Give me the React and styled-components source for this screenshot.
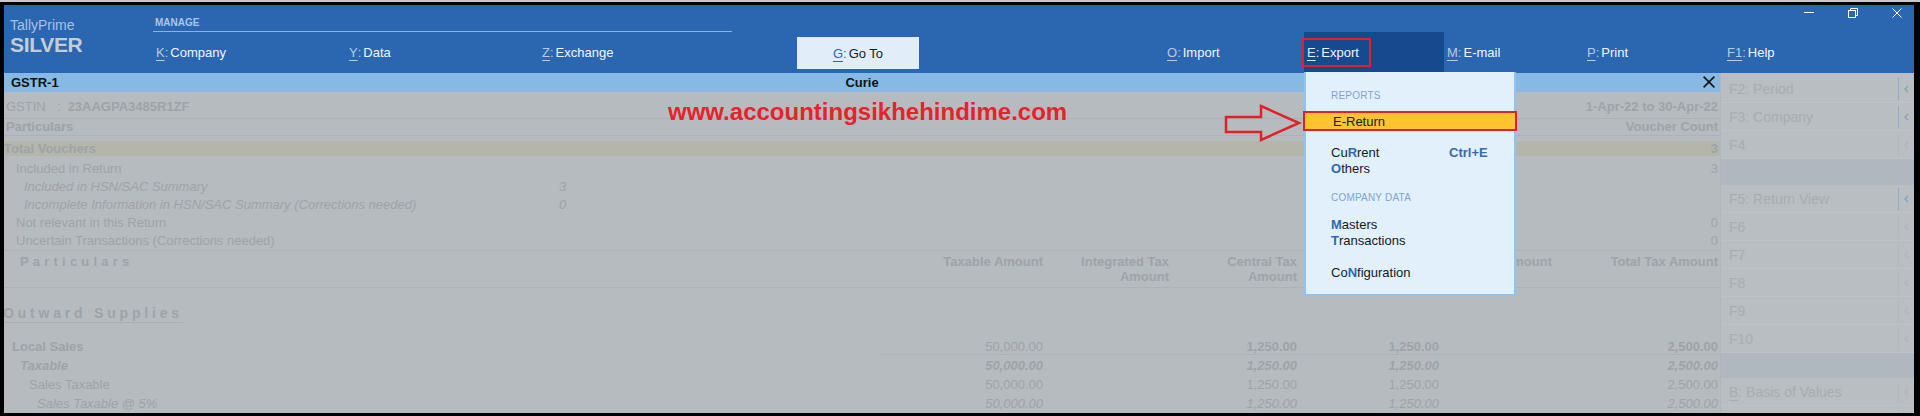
import React from "react";
import styled, { createGlobalStyle } from "styled-components";

const GlobalStyle = createGlobalStyle`
  html, body {
    margin: 0;
    padding: 0;
    background: #000;
  }
  body {
    font-family: "Liberation Sans", Arial, sans-serif;
    font-size: 13px;
  }
  * {
    box-sizing: border-box;
  }
`;

// ---------- frame ----------
const Screen = styled.div`
  width: 1920px;
  height: 416px;
  border-top: 2px solid #c9c9c9;
  background: #000;
`;

const Frame = styled.div`
  position: relative;
  height: 414px;
  border-style: solid;
  border-color: #000;
  border-width: 3px 6px 3px 4px;
  display: flex;
  flex-direction: column;
  overflow: hidden;
`;

// ---------- top bar ----------
const Header = styled.div`
  height: 68px;
  flex-shrink: 0;
  display: flex;
  background: #2b66b0;
`;

const Brand = styled.div`
  width: 149px;
  padding: 12px 0 0 6px;
`;

const BrandName = styled.div`
  font-size: 14px;
  line-height: 16px;
  color: #a8c2e3;
`;

const Edition = styled.div`
  font-size: 21px;
  line-height: 24px;
  font-weight: bold;
  color: #c6ccd5;
  letter-spacing: -0.3px;
`;

const Nav = styled.div`
  flex: 1;
  display: flex;
  flex-direction: column;
`;

const NavTop = styled.div`
  height: 27px;
  display: flex;
`;

const ManageGroup = styled.div`
  width: 579px;
  border-bottom: 1px solid #8db2df;
  padding: 12px 0 0 2px;
  font-size: 10px;
  line-height: 12px;
  font-weight: bold;
  color: #a9c6ea;
`;

const WindowControls = styled.div`
  margin-left: auto;
  display: flex;
  align-items: flex-start;
  gap: 34px;
  padding: 3px 12px 0 0;
`;

const NavItems = styled.div`
  height: 41px;
  display: flex;
`;

const NavItem = styled.div`
  width: ${(p) => p.$w}px;
  margin-left: ${(p) => p.$offset || 0}px;
  padding-left: 3px;
  display: flex;
  align-items: center;
  color: #f2f6fb;
  background: ${(p) => (p.$active ? "#154a8f" : "transparent")};
  white-space: nowrap;
`;

const KeyHint = styled.span`
  color: ${(p) => p.$tone || "#b4cbe8"};
  text-decoration: underline;
  text-underline-offset: 3px;
`;

const Colon = styled.span`
  color: ${(p) => p.$tone || "#b4cbe8"};
  margin-right: 2px;
`;

const GoToButton = styled.div`
  width: 122px;
  height: 32px;
  margin: 5px 0 0 65px;
  display: flex;
  align-items: center;
  justify-content: center;
  background: #e1eefa;
  color: #1a1a1a;
`;

const Annotated = styled.span`
  display: flex;
  align-items: center;
  height: 29px;
  margin-left: -5px;
  padding: 0 10px 0 3px;
  border: 2px solid #e3202a;
`;

// ---------- body ----------
const Body = styled.div`
  flex: 1;
  display: flex;
  min-height: 0;
`;

const Content = styled.div`
  width: 1716px;
  flex-shrink: 0;
  display: flex;
  flex-direction: column;
  background: #b6bbbf;
  color: #9ea3a8;
  overflow: hidden;
`;

const TitleBar = styled.div`
  height: 20px;
  display: grid;
  grid-template-columns: 1fr auto 1fr;
  align-items: center;
  background: #86bae5;
  color: #111;
  font-weight: bold;
`;

const TitleLeft = styled.span`
  padding-left: 7px;
`;

const TitleClose = styled.span`
  justify-self: end;
  padding-right: 5px;
  display: flex;
`;

const InfoRow = styled.div`
  height: 29px;
  display: flex;
  justify-content: space-between;
  align-items: flex-end;
  padding: 0 2px 3px 2px;
  line-height: 16px;
  border-bottom: 1px solid #adb2b7;
`;

const InfoLabel = styled.span`
  display: inline-block;
  width: 51px;
`;

const Strong = styled.span`
  font-weight: bold;
  margin-left: ${(p) => p.$gap || 0}px;
`;

const HeadRow = styled.div`
  height: 17px;
  display: flex;
  justify-content: space-between;
  align-items: center;
  padding: 0 2px;
  font-weight: bold;
  border-bottom: 1px solid #adb2b7;
`;

const TotalRow = styled.div`
  height: 15px;
  margin-top: 5px;
  display: flex;
  justify-content: space-between;
  align-items: center;
  padding: 0 2px 0 0;
  background: #b3b6a8;
  font-weight: bold;
`;

const DetailBlock = styled.div`
  padding-top: 4px;
  border-bottom: 1px solid #adb2b7;
`;

const DetailRow = styled.div`
  height: 18px;
  line-height: 18px;
  display: grid;
  grid-template-columns: 555px 1fr auto;
  padding-right: 2px;
  font-style: ${(p) => (p.$italic ? "italic" : "normal")};
`;

const DetailLabel = styled.span`
  padding-left: ${(p) => p.$indent}px;
  white-space: nowrap;
`;

const AMOUNT_COLUMNS = "875px 164px 126px 128px 142px 113px 166px";

const ColumnHeader = styled.div`
  height: 39px;
  display: grid;
  grid-template-columns: ${AMOUNT_COLUMNS};
  padding: 3px 2px 0 0;
  line-height: 15px;
  font-weight: bold;
  border-bottom: 1px solid #adb2b7;
`;

const SpacedTitle = styled.span`
  padding-left: ${(p) => p.$indent}px;
  letter-spacing: 4.2px;
  font-weight: bold;
`;

const HeaderCell = styled.span`
  text-align: right;
`;

const SectionWrap = styled.div`
  padding-top: 17px;
`;

const SectionTitle = styled.div`
  display: inline-block;
  width: 180px;
  margin-left: -1px;
  line-height: 17px;
  font-size: 14px;
  font-weight: bold;
  letter-spacing: 3.8px;
  white-space: nowrap;
  border-bottom: 1px solid #a9aeb3;
`;

const AmountRow = styled.div`
  height: ${(p) => p.$h}px;
  margin-top: ${(p) => p.$top || 0}px;
  display: grid;
  grid-template-columns: ${AMOUNT_COLUMNS};
  padding-right: 2px;
  align-items: stretch;
  font-style: ${(p) => (p.$italic ? "italic" : "normal")};
`;

const RowLabel = styled.span`
  display: flex;
  align-items: center;
  padding-left: ${(p) => p.$indent}px;
  font-weight: ${(p) => (p.$bold ? "bold" : "normal")};
`;

const AmountCell = styled.span`
  display: flex;
  align-items: center;
  justify-content: flex-end;
  font-weight: ${(p) => (p.$bold ? "bold" : "normal")};
  border-bottom: ${(p) => (p.$ruled ? "1px solid #adb2b7" : "none")};
`;

// ---------- side buttons ----------
const SidePanel = styled.div`
  flex: 1;
  padding-top: 2px;
  background: #b8bdc1;
  border-left: 1px solid #afb5bb;
  display: flex;
  flex-direction: column;
`;

const SideRow = styled.div`
  height: 28px;
  flex-shrink: 0;
  display: flex;
  align-items: center;
  background: #b9bec2;
  border-bottom: 1px solid #bfc3c7;
`;

const SideLabel = styled.span`
  flex: 1;
  padding-left: 8px;
  font-size: 14px;
  color: #a7adb2;
  white-space: nowrap;
`;

const SideKey = styled.span`
  text-decoration: ${(p) => (p.$underline ? "underline" : "none")};
  text-underline-offset: 3px;
`;

const SideDivider = styled.span`
  width: 1px;
  height: 22px;
  background: ${(p) => (p.$active ? "#95a8bd" : "#b2b7bc")};
`;

const SideChevron = styled.span`
  width: 15px;
  display: flex;
  justify-content: center;
  color: ${(p) => (p.$active ? "#8aa0ba" : "#b0b5ba")};
`;

const SideGap = styled.div`
  height: ${(p) => p.$h}px;
  flex-shrink: 0;
  background: #b1b7be;
`;

// ---------- overlays ----------
const Watermark = styled.div`
  position: absolute;
  left: 664px;
  top: 93px;
  font-size: 24px;
  line-height: 28px;
  font-weight: bold;
  color: #e8222b;
  white-space: nowrap;
`;

const PointerArrow = styled.svg`
  position: absolute;
  left: 1220px;
  top: 99px;
`;

const ExportMenu = styled.div`
  position: absolute;
  left: 1300px;
  top: 67px;
  width: 212px;
  padding: 17px 0 13px 0;
  background: #e2f0fb;
  border: 2px solid #90c3ee;
  border-top: none;
  color: #111a24;
`;

const MenuHeading = styled.div`
  margin-top: ${(p) => p.$top || 0}px;
  padding-left: 25px;
  font-size: 10px;
  line-height: 14px;
  letter-spacing: 0.2px;
  color: #7ea4d0;
`;

const SelectedItem = styled.div`
  height: 20px;
  margin: 8px -3px 0 -3px;
  padding-left: 28px;
  display: flex;
  align-items: center;
  background: #fdc42f;
  border: 2px solid #e3202a;
`;

const MenuItem = styled.div`
  margin-top: ${(p) => p.$top || 0}px;
  padding-left: 25px;
  line-height: 16px;
  display: flex;
`;

const MenuText = styled.span`
  width: 118px;
`;

const HotKey = styled.span`
  color: #2c68b6;
  font-weight: bold;
`;

const Shortcut = styled.span`
  color: #3b68ad;
  font-weight: bold;
`;

// ---------- data ----------
const leftItems = [
  { k: "K", label: "Company" },
  { k: "Y", label: "Data" },
  { k: "Z", label: "Exchange" },
];

const rightItems = [
  { k: "M", label: "E-mail" },
  { k: "P", label: "Print" },
  { k: "F1", label: "Help" },
];

const details = [
  { label: "Included in Return", indent: 12, right: "3" },
  { label: "Included in HSN/SAC Summary", indent: 20, italic: true, sub: "3" },
  {
    label: "Incomplete Information in HSN/SAC Summary (Corrections needed)",
    indent: 20,
    italic: true,
    sub: "0",
  },
  { label: "Not relevant in this Return", indent: 12, right: "0" },
  { label: "Uncertain Transactions (Corrections needed)", indent: 12, right: "0" },
];

const columns = [
  ["Taxable Amount"],
  ["Integrated Tax", "Amount"],
  ["Central Tax", "Amount"],
  ["State Tax", "Amount"],
  ["Cess Amount"],
  ["Total Tax Amount"],
];

const amounts = [
  {
    label: "Local Sales",
    indent: 8,
    bold: true,
    h: 19,
    top: 15,
    ruled: true,
    values: [
      ["50,000.00", false],
      ["", false],
      ["1,250.00", true],
      ["1,250.00", true],
      ["", false],
      ["2,500.00", true],
    ],
  },
  {
    label: "Taxable",
    indent: 16,
    bold: true,
    italic: true,
    h: 21,
    values: [
      ["50,000.00", true],
      ["", true],
      ["1,250.00", true],
      ["1,250.00", true],
      ["", true],
      ["2,500.00", true],
    ],
  },
  {
    label: "Sales Taxable",
    indent: 25,
    h: 20,
    values: [
      ["50,000.00"],
      [""],
      ["1,250.00"],
      ["1,250.00"],
      [""],
      ["2,500.00"],
    ],
  },
  {
    label: "Sales Taxable @ 5%",
    indent: 33,
    italic: true,
    h: 20,
    values: [
      ["50,000.00"],
      [""],
      ["1,250.00"],
      ["1,250.00"],
      [""],
      ["2,500.00"],
    ],
  },
];

const sideButtons = [
  { k: "F2", label: "Period", active: true },
  { k: "F3", label: "Company", active: true },
  { k: "F4" },
  { gap: 26 },
  { k: "F5", label: "Return View", active: true },
  { k: "F6" },
  { k: "F7" },
  { k: "F8" },
  { k: "F9" },
  { k: "F10" },
  { gap: 25 },
  { k: "B", label: "Basis of Values", underline: true },
  { k: "" },
];

// ---------- icons ----------
const MinimizeIcon = () => (
  <svg width="10" height="10" viewBox="0 0 10 10">
    <path d="M0 4.5H10" stroke="#fff" strokeWidth="1" />
  </svg>
);

const RestoreIcon = () => (
  <svg width="10" height="10" viewBox="0 0 10 10" fill="none" stroke="#fff" strokeWidth="1">
    <rect x="0.5" y="2.5" width="7" height="7" />
    <path d="M2.5 2.5V0.5H9.5V7.5H7.5" />
  </svg>
);

const CloseIcon = ({ color = "#fff", size = 10, width = 1 }) => (
  <svg width={size} height={size} viewBox="0 0 10 10" stroke={color} strokeWidth={width}>
    <path d="M0.5 0.5L9.5 9.5M9.5 0.5L0.5 9.5" />
  </svg>
);

const Chevron = () => (
  <svg width="5" height="8" viewBox="0 0 5 8" fill="none" stroke="currentColor" strokeWidth="1.4">
    <path d="M4 1L1 4L4 7" />
  </svg>
);

const App = () => {
  return (
    <>
      <GlobalStyle />
      <Screen>
        <Frame>
          <Header>
            <Brand>
              <BrandName>TallyPrime</BrandName>
              <Edition>SILVER</Edition>
            </Brand>
            <Nav>
              <NavTop>
                <ManageGroup>MANAGE</ManageGroup>
                <WindowControls>
                  <MinimizeIcon />
                  <RestoreIcon />
                  <CloseIcon />
                </WindowControls>
              </NavTop>
              <NavItems>
                {leftItems.map((item) => (
                  <NavItem key={item.k} $w={193}>
                    <KeyHint>{item.k}</KeyHint>
                    <Colon>:</Colon>
                    {item.label}
                  </NavItem>
                ))}
                <GoToButton>
                  <KeyHint $tone="#2c67b1">G</KeyHint>
                  <Colon $tone="#2c67b1">:</Colon>
                  Go To
                </GoToButton>
                <NavItem $w={140} $offset={245}>
                  <KeyHint>O</KeyHint>
                  <Colon>:</Colon>
                  Import
                </NavItem>
                <NavItem $w={140} $active>
                  <Annotated>
                    <KeyHint $tone="#dfe9f6">E</KeyHint>
                    <Colon $tone="#dfe9f6">:</Colon>
                    Export
                  </Annotated>
                </NavItem>
                {rightItems.map((item) => (
                  <NavItem key={item.k} $w={140}>
                    <KeyHint>{item.k}</KeyHint>
                    <Colon>:</Colon>
                    {item.label}
                  </NavItem>
                ))}
              </NavItems>
            </Nav>
          </Header>

          <Body>
            <Content>
              <TitleBar>
                <TitleLeft>GSTR-1</TitleLeft>
                <span>Curie</span>
                <TitleClose>
                  <CloseIcon color="#111" size={12} width={1.3} />
                </TitleClose>
              </TitleBar>

              <InfoRow>
                <span>
                  <InfoLabel>GSTIN</InfoLabel>:<Strong $gap={7}>23AAGPA3485R1ZF</Strong>
                </span>
                <Strong>1-Apr-22 to 30-Apr-22</Strong>
              </InfoRow>

              <HeadRow>
                <span>Particulars</span>
                <span>Voucher Count</span>
              </HeadRow>

              <TotalRow>
                <span>Total Vouchers</span>
                <span>3</span>
              </TotalRow>

              <DetailBlock>
                {details.map((row) => (
                  <DetailRow key={row.label} $italic={row.italic}>
                    <DetailLabel $indent={row.indent}>{row.label}</DetailLabel>
                    <span>{row.sub}</span>
                    <span>{row.right}</span>
                  </DetailRow>
                ))}
              </DetailBlock>

              <ColumnHeader>
                <SpacedTitle $indent={16}>Particulars</SpacedTitle>
                {columns.map((lines) => (
                  <HeaderCell key={lines.join(" ")}>
                    {lines.map((line) => (
                      <div key={line}>{line}</div>
                    ))}
                  </HeaderCell>
                ))}
              </ColumnHeader>

              <SectionWrap>
                <SectionTitle>Outward Supplies</SectionTitle>
              </SectionWrap>

              {amounts.map((row) => (
                <AmountRow key={row.label} $h={row.h} $top={row.top} $italic={row.italic}>
                  <RowLabel $indent={row.indent} $bold={row.bold}>
                    {row.label}
                  </RowLabel>
                  {row.values.map(([value, bold], i) => (
                    <AmountCell key={i} $bold={bold} $ruled={row.ruled}>
                      {value}
                    </AmountCell>
                  ))}
                </AmountRow>
              ))}
            </Content>

            <SidePanel>
              {sideButtons.map((btn, i) =>
                btn.gap ? (
                  <SideGap key={i} $h={btn.gap} />
                ) : (
                  <SideRow key={i}>
                    <SideLabel>
                      <SideKey $underline={btn.underline}>{btn.k}</SideKey>
                      {btn.label ? `: ${btn.label}` : ""}
                    </SideLabel>
                    <SideDivider $active={btn.active} />
                    <SideChevron $active={btn.active}>
                      <Chevron />
                    </SideChevron>
                  </SideRow>
                )
              )}
            </SidePanel>
          </Body>

          <Watermark>www.accountingsikhehindime.com</Watermark>

          <PointerArrow width="78" height="38" viewBox="0 0 78 38">
            <polygon
              points="2,13 37,13 37,2 75,19 37,36 37,28 2,28"
              fill="none"
              stroke="#e3202a"
              strokeWidth="2.5"
            />
          </PointerArrow>

          <ExportMenu>
            <MenuHeading>REPORTS</MenuHeading>
            <SelectedItem>E-Return</SelectedItem>
            <MenuItem $top={14}>
              <MenuText>
                Cu<HotKey>R</HotKey>rent
              </MenuText>
              <Shortcut>Ctrl+E</Shortcut>
            </MenuItem>
            <MenuItem>
              <MenuText>
                <HotKey>O</HotKey>thers
              </MenuText>
            </MenuItem>
            <MenuHeading $top={14}>COMPANY DATA</MenuHeading>
            <MenuItem $top={12}>
              <MenuText>
                <HotKey>M</HotKey>asters
              </MenuText>
            </MenuItem>
            <MenuItem>
              <MenuText>
                <HotKey>T</HotKey>ransactions
              </MenuText>
            </MenuItem>
            <MenuItem $top={16}>
              <MenuText>
                Co<HotKey>N</HotKey>figuration
              </MenuText>
            </MenuItem>
          </ExportMenu>
        </Frame>
      </Screen>
    </>
  );
};

export default App;
